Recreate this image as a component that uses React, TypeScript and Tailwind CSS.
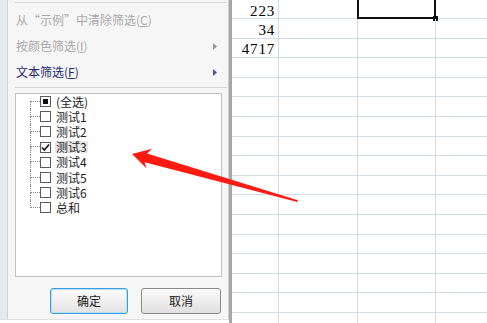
import type { ReactNode } from "react";

const items = ["(全选)", "测试1", "测试2", "测试3", "测试4", "测试5", "测试6", "总和"];

function TriangleRight({ color }: { color: string }) {
  return (
    <svg width="4" height="7" viewBox="0 0 4 7">
      <path d="M0 0 L4 3.5 L0 7 Z" fill={color} />
    </svg>
  );
}

function MenuItem({ children, arrow, className }: { children: ReactNode; arrow?: string; className: string }) {
  return (
    <div className={`flex h-[26px] items-center justify-between pl-[8px] pr-[11px] text-[12px] ${className}`}>
      <span>{children}</span>
      {arrow && <TriangleRight color={arrow} />}
    </div>
  );
}

function Checkbox({ state }: { state: "none" | "some" | "all" }) {
  return (
    <div className="flex h-[11px] w-[11px] shrink-0 items-center justify-center border border-[#5c5c5c] bg-white">
      {state === "some" && <div className="h-[5px] w-[5px] bg-[#111]" />}
      {state === "all" && (
        <svg width="9" height="9" viewBox="0 0 9 9">
          <path d="M1 4.5 L3.4 7 L8 1.5" fill="none" stroke="#111" strokeWidth="1.6" />
        </svg>
      )}
    </div>
  );
}

function TreeRow({ label, index }: { label: string; index: number }) {
  const first = index === 0;
  const last = index === items.length - 1;
  const state = index === 0 ? "some" : index === 3 ? "all" : "none";
  return (
    <div className="flex h-[15.2px] items-center pl-[14px]">
      {/* dotted tree connector */}
      <div className="flex h-full w-[10px] shrink-0 flex-col">
        <div
          className={`h-1/2 border-b border-dotted border-b-[#8a8a8a] ${
            first ? "" : "border-l border-l-[#8a8a8a]"
          }`}
        />
        <div className={`h-1/2 ${last ? "" : "border-l border-dotted border-l-[#8a8a8a]"}`} />
      </div>
      <Checkbox state={state} />
      <span
        className={`ml-[4px] px-[1px] text-[12px] leading-[12px] text-[#1e1e1e] ${
          index === 3 ? "bg-[#e8e8e8]" : ""
        }`}
      >
        {label}
      </span>
    </div>
  );
}

function SheetRow({ value, first, selected }: { value?: string; first?: boolean; selected?: boolean }) {
  return (
    <div className={`flex shrink-0 border-b border-[#d6dce6] ${first ? "h-[19px]" : "h-[19.6px]"}`}>
      <div className="flex w-[47px] items-center justify-end border-r border-[#d6dce6] pr-[3px] pt-[4px] font-['Liberation_Serif',serif] text-[15px] leading-none tracking-[0.8px] text-black">
        {value}
      </div>
      <div className="w-[78.6px] border-r border-[#d6dce6]" />
      <div className="relative w-[78.5px] border-r border-[#d6dce6]">
        {selected && (
          <>
            <div className="absolute -left-[1px] -top-[4px] -right-[1px] -bottom-[1px] border-2 border-[#111]" />
            <div className="absolute -right-[3px] -bottom-[3px] h-[5px] w-[5px] bg-[#111]" />
          </>
        )}
      </div>
      <div className="flex-1" />
    </div>
  );
}

export default function App() {
  const values = ["223", "34", "4717"];
  return (
    <div className="relative flex h-[323px] w-[487px] overflow-hidden bg-white font-['Noto_Sans_CJK_SC','Noto_Sans',sans-serif]">
      {/* Filter dropdown */}
      <div className="flex w-[229px] shrink-0 flex-col">
        <div className="flex h-[320px] border-b border-[#dde2e5]">
          <div className="w-[8px] shrink-0 border-r border-[#cdd4d8] bg-[#e5eaed]" />
          <div className="flex w-[221px] flex-col border-r border-[#d0d0d0] bg-[#f6f6f6]">
            <div className="ml-[7px] mr-[1px] mt-[2px] h-px bg-[#d4d4d4]" />
            <div className="mt-[4px]">
              <MenuItem className="text-[#a9a9a9]">
                从“示例”中清除筛选(<span className="underline">C</span>)
              </MenuItem>
              <MenuItem className="text-[#a9a9a9]" arrow="#9a9a9a">
                按颜色筛选(<span className="underline">I</span>)
              </MenuItem>
              <MenuItem className="text-[#1d2a6c]" arrow="#4257a8">
                文本筛选(<span className="underline">F</span>)
              </MenuItem>
            </div>
            <div className="ml-[7px] mr-[1px] mt-[2px] h-px bg-[#d4d4d4]" />

            {/* value list */}
            <div className="ml-[7px] mt-[5px] flex h-[184px] w-[207px] flex-col border border-[#c2c2c2] bg-white">
              {items.map((label, i) => (
                <TreeRow key={label} label={label} index={i} />
              ))}
            </div>

            <div className="ml-[42px] mt-[11px] flex gap-[13px]">
              <button className="h-[26px] w-[78px] rounded-[3px] border border-[#3c9be0] bg-gradient-to-b from-[#fdfdfd] to-[#e2e2e2] text-[12px] text-[#1a1a1a] shadow-[inset_0_0_0_1px_#b4e0f8]">
                确定
              </button>
              <button className="h-[26px] w-[80px] rounded-[3px] border border-[#8a8a8a] bg-gradient-to-b from-[#fbfbfb] to-[#e0e0e0] text-[12px] text-[#1a1a1a]">
                取消
              </button>
            </div>
          </div>
        </div>
      </div>

      {/* panel shadow edge */}
      <div className="w-[3px] shrink-0 bg-[#a6a6a6]" />

      {/* Spreadsheet */}
      <div className="flex flex-1 flex-col">
        {Array.from({ length: 17 }).map((_, i) => (
          <SheetRow key={i} value={values[i]} first={i === 0} selected={i === 0} />
        ))}
      </div>

      {/* annotation arrow */}
      <svg className="pointer-events-none absolute left-0 top-0" width="487" height="323" viewBox="0 0 487 323">
        <path
          d="M132 154 L152 148.8 L147 153.4 L297.8 200.3 L297.4 201.9 L144.6 162.3 L146.6 168.6 Z"
          fill="#ff1a12"
        />
      </svg>
    </div>
  );
}
